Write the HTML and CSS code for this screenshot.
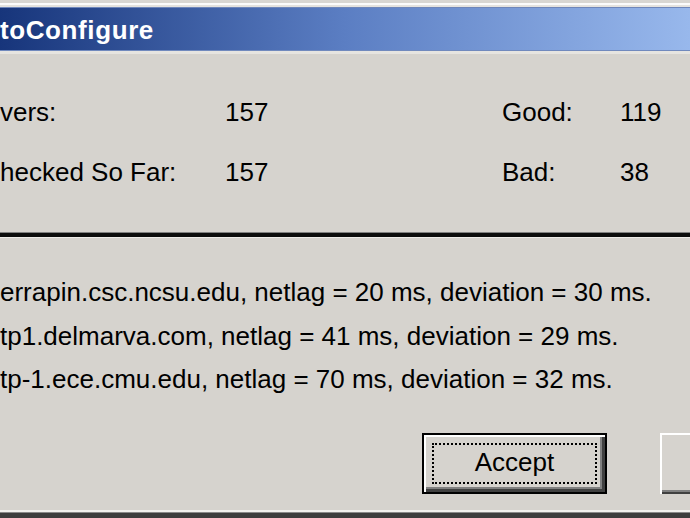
FILE: index.html
```html
<!DOCTYPE html>
<html lang="en">

<head>
    <meta charset="UTF-8">
    <meta name="viewport" content="width=device-width, initial-scale=1.0">
    <title>AutoConfigure</title>
    <link rel="stylesheet" href="styles.css">
</head>

<body>
    <div class="dialog">
        <!-- Window frame and caption -->
        <div class="frame-top"></div>
        <div class="titlebar">
            <span class="title">toConfigure</span>
        </div>

        <!-- Server counts -->
        <div class="stats">
            <span class="label">vers:</span>
            <span class="value">157</span>
            <span class="label">Good:</span>
            <span class="value">119</span>
            <span class="label">hecked So Far:</span>
            <span class="value">157</span>
            <span class="label">Bad:</span>
            <span class="value">38</span>
        </div>

        <div class="divider"></div>

        <!-- Best servers found -->
        <ul class="results">
            <li>errapin.csc.ncsu.edu, netlag = 20 ms, deviation = 30 ms.</li>
            <li>tp1.delmarva.com, netlag = 41 ms, deviation = 29 ms.</li>
            <li>tp-1.ece.cmu.edu, netlag = 70 ms, deviation = 32 ms.</li>
        </ul>

        <div class="buttons">
            <button class="btn btn-default"><span class="focus">Accept</span></button>
            <button class="btn"></button>
        </div>

        <div class="frame-bottom"></div>
    </div>
</body>

</html>
```

FILE: styles.css
```css
body {
    margin: 0;
    background-color: #d6d3ce;
    font-family: "Liberation Sans", Arial, sans-serif;
    color: #000;
}

.dialog {
    width: 690px;
    height: 518px;
    overflow: hidden;
    display: flex;
    flex-direction: column;
}

.frame-top {
    height: 3px;
    background-color: #d8d6d2;
    border-bottom: 2px solid #fbfbfb;
    box-shadow: 0 2px 0 #e4e2de;
    flex-shrink: 0;
}

.titlebar {
    height: 44px;
    margin-top: 2px;
    background: linear-gradient(to right, #17357b, #5b7ec3 50%, #98b8ec);
    border-top: 1px solid #6e86ba;
    border-bottom: 1px solid #7189bd;
    display: flex;
    align-items: center;
    padding-top: 2px;
    box-sizing: border-box;
    flex-shrink: 0;
}

.title {
    color: #fff;
    font-weight: bold;
    font-size: 26px;
    letter-spacing: 0.6px;
}

.stats {
    display: grid;
    grid-template-columns: 225px 277px 118px 1fr;
    grid-auto-rows: 60px;
    align-items: center;
    padding-top: 28px;
    font-size: 26px;
    border-top: 3px solid #e6e4e0;
}

.divider {
    margin-top: 30px;
    height: 4px;
    background-color: #0c0c0c;
    border-top: 1px solid #808080;
    border-bottom: 1px solid #eeece8;
    flex-shrink: 0;
}

.results {
    list-style: none;
    margin: 0;
    padding: 33px 0 0 0;
    font-size: 26px;
    line-height: 43.5px;
}

.results li {
    white-space: nowrap;
}

.buttons {
    display: flex;
    gap: 53px;
    margin-top: 31px;
    margin-left: 422px;
}

.btn {
    flex-shrink: 0;
    width: 185px;
    height: 61px;
    background-color: #d6d3ce;
    border: none;
    padding: 0;
    font-family: inherit;
    font-size: 26px;
    color: #000;
    box-shadow: inset 2px 2px 0 #fff, inset -2px -2px 0 #404040, inset -4px -4px 0 #808080;
}

.btn-default {
    border: 2px solid #000;
    padding: 8px;
    box-shadow: inset 2px 2px 0 #fff, inset -3px -3px 0 #404040, inset -5px -5px 0 #808080;
}

.focus {
    display: flex;
    align-items: center;
    justify-content: center;
    height: 100%;
    box-sizing: border-box;
    border: 2px dotted #000;
    padding-bottom: 1px;
}

.frame-bottom {
    margin-top: auto;
    height: 5px;
    background-color: #3e3e3e;
    border-top: 1px solid #8a8a8a;
    box-shadow: 0 -2px 0 #f2f1ee;
    flex-shrink: 0;
}
```
